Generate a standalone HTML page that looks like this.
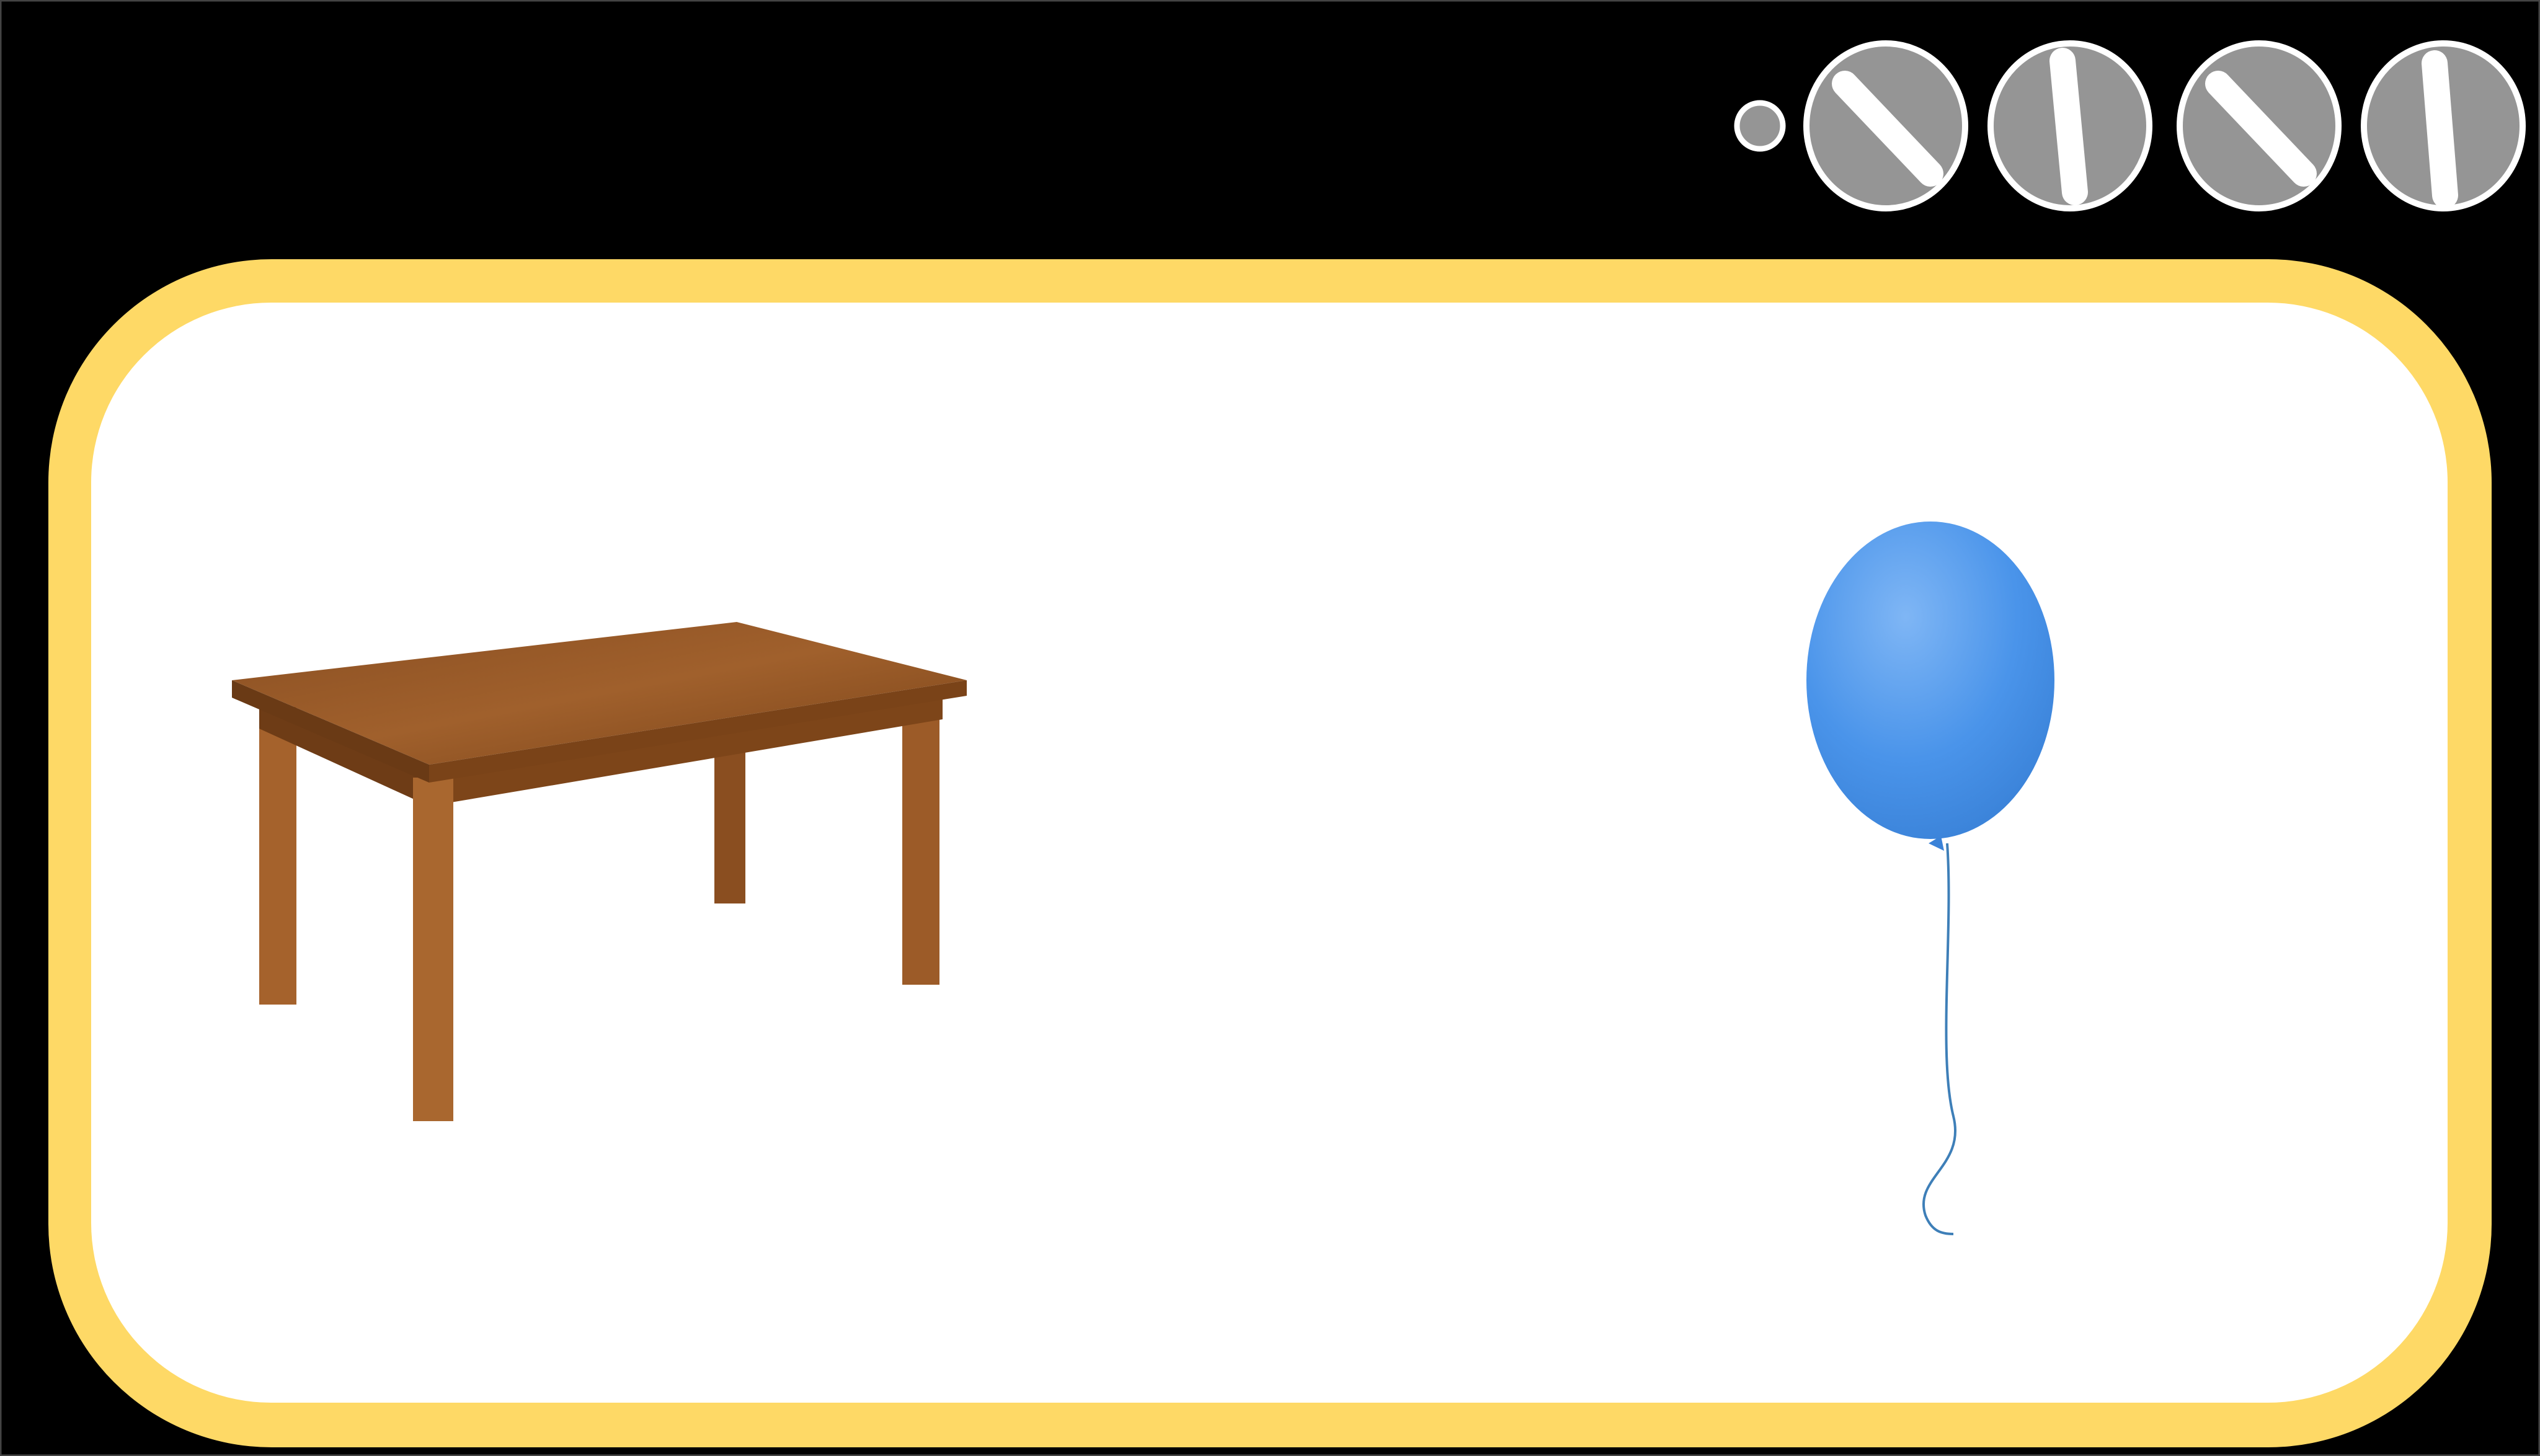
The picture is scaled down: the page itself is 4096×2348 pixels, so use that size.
<!DOCTYPE html>
<html><head><meta charset="utf-8"><style>
html,body{margin:0;padding:0;background:#000;width:4096px;height:2348px;overflow:hidden}
svg{display:block}
</style></head><body>
<svg width="4096" height="2348" viewBox="0 0 4096 2348" xmlns="http://www.w3.org/2000/svg">
<defs>
<radialGradient id="bal" cx="0.4" cy="0.3" r="0.75">
<stop offset="0" stop-color="#7fb6f5"/><stop offset="0.6" stop-color="#4a94ea"/><stop offset="1" stop-color="#3a82d8"/>
</radialGradient>
<linearGradient id="top" x1="0" y1="0" x2="1" y2="1">
<stop offset="0" stop-color="#8a4f22"/><stop offset="0.5" stop-color="#a0602c"/><stop offset="1" stop-color="#7a4318"/>
</linearGradient>
</defs>
<rect x="0" y="0" width="4096" height="2348" fill="#000"/>
<rect x="1" y="1" width="4094" height="2346" fill="none" stroke="#444" stroke-width="3"/>
<rect x="78" y="418" width="3940" height="1916" rx="360" fill="#fed966"/>
<rect x="147" y="488" width="3800" height="1774" rx="290" fill="#fff"/>
<circle cx="2838" cy="203" r="37" fill="#959595" stroke="#fff" stroke-width="9"/>
<g stroke="#fff" stroke-width="10" fill="#959595">
<ellipse cx="3041" cy="203" rx="128" ry="133"/>
<ellipse cx="3338" cy="203" rx="128" ry="133"/>
<ellipse cx="3643" cy="203" rx="128" ry="133"/>
<ellipse cx="3940" cy="203" rx="128" ry="133"/>
</g>
<g stroke="#fff" stroke-width="42" stroke-linecap="round">
<line x1="2975" y1="135" x2="3113" y2="280"/>
<line x1="3326" y1="98" x2="3346" y2="310"/>
<line x1="3577" y1="135" x2="3715" y2="280"/>
<line x1="3926" y1="102" x2="3943" y2="315"/>
</g>
<g>
<rect x="1152" y="1200" width="50" height="257" fill="#8a4e20"/>
<rect x="418" y="1140" width="60" height="480" fill="#a5622c"/>
<rect x="1455" y="1115" width="60" height="473" fill="#9c5b28"/>
<polygon points="418,1125 692,1250 692,1300 418,1175" fill="#6e3c16"/>
<polygon points="692,1250 1520,1110 1520,1160 692,1300" fill="#7d4519"/>
<rect x="666" y="1254" width="65" height="554" fill="#a9672f"/>
<polygon points="374,1097 1188,1003 1559,1097 692,1233" fill="url(#top)"/>
<polygon points="374,1097 692,1233 692,1262 374,1125" fill="#6a3a15"/>
<polygon points="692,1233 1559,1097 1559,1122 692,1262" fill="#7a4318"/>
</g>
<path d="M3140,1360 C3150,1500 3125,1700 3150,1800 C3170,1880 3085,1900 3105,1960 C3115,1985 3130,1990 3150,1990" fill="none" stroke="#3e7fb8" stroke-width="4"/>
<polygon points="3110,1360 3130,1348 3135,1372" fill="#3a82d8"/>
<ellipse cx="3113" cy="1097" rx="200" ry="256" fill="url(#bal)"/>
</svg>
</body></html>
